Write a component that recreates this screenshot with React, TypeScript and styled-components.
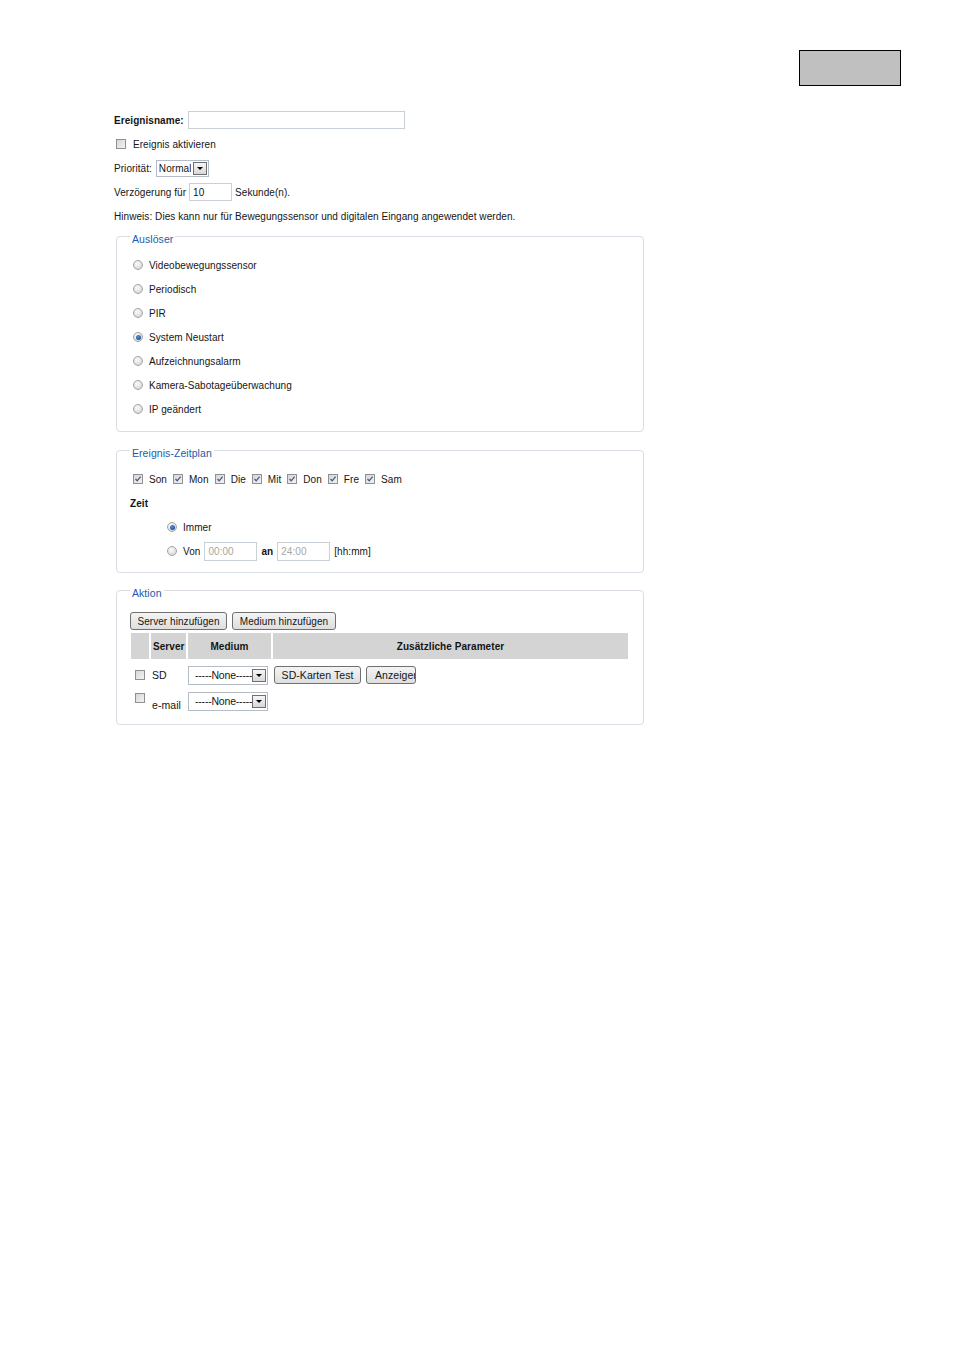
import React from "react";
import styled, { createGlobalStyle } from "styled-components";

const GlobalStyle = createGlobalStyle`
  html, body {
    margin: 0;
    padding: 0;
    background: #fff;
  }
  body {
    font-family: "Liberation Sans", Arial, sans-serif;
    font-size: 10px;
    letter-spacing: 0.06px;
    color: #151515;
  }
`;

const Page = styled.div`
  width: 954px;
  min-height: 1350px;
`;

const TopBar = styled.div`
  display: flex;
  justify-content: flex-end;
  padding: 50px 53px 0 0;
`;

const GrayBox = styled.div`
  width: 100px;
  height: 34px;
  background: #c0c0c0;
  border: 1px solid #000;
`;

const Form = styled.div`
  padding: 22px 0 0 114px;
  width: 540px;
`;

const Row = styled.div<{ $indent?: number; $gap?: number }>`
  display: flex;
  align-items: center;
  height: 24px;
  padding-left: ${(p) => p.$indent || 0}px;
  gap: ${(p) => p.$gap ?? 4}px;
  white-space: nowrap;
`;

const Bold = styled.span`
  font-weight: bold;
`;

const TextInput = styled.div<{ $w: number; $h?: number; $disabled?: boolean }>`
  width: ${(p) => p.$w}px;
  height: ${(p) => p.$h || 18}px;
  box-sizing: border-box;
  border: 1px solid #c9d0d8;
  background: #fff;
  padding: 0 3px;
  display: flex;
  align-items: center;
  color: ${(p) => (p.$disabled ? "#a6a6a6" : "#111")};
`;

const Box = styled.span`
  position: relative;
  display: inline-block;
  flex: none;
  width: 10px;
  height: 10px;
  box-sizing: border-box;
  border: 1px solid #8f9090;
  background: linear-gradient(135deg, #d6d6d6, #f3f3f3);
  svg {
    position: absolute;
    left: 0;
    top: 0;
  }
`;

const Checkbox = ({ checked }: { checked?: boolean }) => (
  <Box>
    {checked && (
      <svg width="8" height="8" viewBox="0 0 8 8">
        <path d="M1.5 4 L3.2 5.8 L6.6 1.6" fill="none" stroke="#4b5a86" strokeWidth="1.3" />
      </svg>
    )}
  </Box>
);

const Radio = styled.span<{ $on?: boolean }>`
  position: relative;
  display: inline-block;
  flex: none;
  width: 10px;
  height: 10px;
  border-radius: 50%;
  box-sizing: border-box;
  border: 1px solid #a3a3a3;
  background: radial-gradient(circle at 40% 35%, #fbfbfb, #cfcfcf);
  &::after {
    content: "";
    display: ${(p) => (p.$on ? "block" : "none")};
    position: absolute;
    left: 1.5px;
    top: 1.5px;
    width: 5px;
    height: 5px;
    border-radius: 50%;
    background: radial-gradient(circle at 40% 35%, #4f94d6, #0b3f80);
  }
`;

const SelectBox = styled.div<{ $w: number; $h: number; $pad?: number }>`
  width: ${(p) => p.$w}px;
  height: ${(p) => p.$h}px;
  box-sizing: border-box;
  border: 1px solid #b4bcc6;
  background: #fff;
  display: flex;
  align-items: center;
  justify-content: space-between;
  padding: 0 1px 0 ${(p) => p.$pad ?? 2}px;
  white-space: nowrap;
`;

const SelectValue = styled.span<{ $tight?: boolean }>`
  overflow: hidden;
  letter-spacing: ${(p) => (p.$tight ? "-0.2px" : "inherit")};
`;

const Arrow = styled.span`
  flex: none;
  width: 14px;
  height: 13px;
  box-sizing: border-box;
  border: 1px solid #6f6f6f;
  background: linear-gradient(#f6f6f6, #d8d8d8);
  display: flex;
  align-items: center;
  justify-content: center;
  &::before {
    content: "";
    border-left: 3px solid transparent;
    border-right: 3px solid transparent;
    border-top: 3px solid #000;
  }
`;

const Select = ({ value, w, h, pad, tight }: { value: string; w: number; h: number; pad?: number; tight?: boolean }) => (
  <SelectBox $w={w} $h={h} $pad={pad}>
    <SelectValue $tight={tight}>{value}</SelectValue>
    <Arrow />
  </SelectBox>
);

const Fieldset = styled.fieldset<{ $top: number; $pt: number; $pb: number }>`
  margin: ${(p) => p.$top}px 0 0 2px;
  width: 528px;
  box-sizing: border-box;
  border: 1px solid #d9dee4;
  border-radius: 4px;
  padding: ${(p) => p.$pt}px 13px ${(p) => p.$pb}px 13px;
  min-width: 0;
`;

const Legend = styled.legend`
  position: relative;
  top: 3px;
  padding: 0 2px;
  color: #1b5cab;
  font-size: 10.5px;
  line-height: 14px;
`;

const Button = styled.div<{ $w: number; $clip?: boolean }>`
  width: ${(p) => p.$w}px;
  height: 18px;
  box-sizing: border-box;
  border: 1px solid #707070;
  border-radius: 3px;
  background: linear-gradient(#f4f4f4, #dedede);
  display: flex;
  align-items: center;
  justify-content: ${(p) => (p.$clip ? "flex-start" : "center")};
  padding-left: ${(p) => (p.$clip ? 8 : 0)}px;
  overflow: hidden;
  white-space: nowrap;
  flex: none;
`;

const ButtonRow = styled.div`
  display: flex;
  gap: 5px;
`;

const Table = styled.table`
  border-collapse: separate;
  border-spacing: 2px;
  margin: 1px 0 0 -1px;
  table-layout: fixed;
`;

const Th = styled.th<{ $w: number; $left?: boolean }>`
  width: ${(p) => p.$w}px;
  height: 26px;
  padding: 0 0 0 ${(p) => (p.$left ? 2 : 0)}px;
  background: #d4d4d4;
  text-align: ${(p) => (p.$left ? "left" : "center")};
  font-weight: bold;
  box-sizing: border-box;
`;

const Td = styled.td<{ $valign?: string; $pl?: number; $h?: number }>`
  padding: 0 0 0 ${(p) => p.$pl ?? 0}px;
  vertical-align: ${(p) => p.$valign || "middle"};
  height: ${(p) => p.$h || 20}px;
  font-size: 10.5px;
`;

const CellFlex = styled.div<{ $pt?: number }>`
  display: flex;
  gap: 5px;
  align-items: center;
  padding-top: ${(p) => p.$pt || 0}px;
`;

const triggers = [
  "Videobewegungssensor",
  "Periodisch",
  "PIR",
  "System Neustart",
  "Aufzeichnungsalarm",
  "Kamera-Sabotageüberwachung",
  "IP geändert",
];

const days = ["Son", "Mon", "Die", "Mit", "Don", "Fre", "Sam"];

export default function App() {
  return (
    <Page>
      <GlobalStyle />
      <TopBar>
        <GrayBox />
      </TopBar>

      <Form>
        <Row $gap={4}>
          <Bold>Ereignisname:</Bold>
          <TextInput $w={217} />
        </Row>
        <Row $indent={2} $gap={7}>
          <Checkbox />
          <span>Ereignis aktivieren</span>
        </Row>
        <Row $gap={4}>
          <span>Priorität:</span>
          <Select value="Normal" w={53} h={17} />
        </Row>
        <Row $gap={3}>
          <span>Verzögerung für</span>
          <TextInput $w={43}>10</TextInput>
          <span>Sekunde(n).</span>
        </Row>
        <Row>
          <span>Hinweis: Dies kann nur für Bewegungssensor und digitalen Eingang angewendet werden.</span>
        </Row>

        <Fieldset $top={1} $pt={10} $pb={10}>
          <Legend>Auslöser</Legend>
          {triggers.map((t) => (
            <Row key={t} $indent={3} $gap={6}>
              <Radio $on={t === "System Neustart"} />
              <span>{t}</span>
            </Row>
          ))}
        </Fieldset>

        <Fieldset $top={11} $pt={10} $pb={9}>
          <Legend>Ereignis-Zeitplan</Legend>
          <Row $indent={3} $gap={6}>
            {days.map((d) => (
              <React.Fragment key={d}>
                <Checkbox checked />
                <span>{d}</span>
              </React.Fragment>
            ))}
          </Row>
          <Row $indent={-1}>
            <Bold>Zeit</Bold>
          </Row>
          <Row $indent={37} $gap={6}>
            <Radio $on />
            <span>Immer</span>
          </Row>
          <Row $indent={37} $gap={4}>
            <Radio />
            <span style={{ marginLeft: 2 }}>Von</span>
            <TextInput $w={53} $h={19} $disabled>
              00:00
            </TextInput>
            <Bold>an</Bold>
            <TextInput $w={53} $h={19} $disabled>
              24:00
            </TextInput>
            <span>[hh:mm]</span>
          </Row>
        </Fieldset>

        <Fieldset $top={10} $pt={15} $pb={11}>
          <Legend>Aktion</Legend>
          <ButtonRow>
            <Button $w={97}>Server hinzufügen</Button>
            <Button $w={104}>Medium hinzufügen</Button>
          </ButtonRow>
          <Table>
            <thead>
              <tr>
                <Th $w={18} />
                <Th $w={35} $left>
                  Server
                </Th>
                <Th $w={83}>Medium</Th>
                <Th $w={355}>Zusätzliche Parameter</Th>
              </tr>
            </thead>
            <tbody>
              <tr>
                <Td $pl={4} $h={28}>
                  <CellFlex>
                    <Checkbox />
                  </CellFlex>
                </Td>
                <Td $pl={1} $h={28}>
                  SD
                </Td>
                <Td $h={28}>
                  <Select value="-----None-----" w={80} h={19} pad={6} tight />
                </Td>
                <Td $pl={1} $h={28}>
                  <CellFlex>
                    <Button $w={87}>SD-Karten Test</Button>
                    <Button $w={50} $clip>
                      Anzeigen
                    </Button>
                  </CellFlex>
                </Td>
              </tr>
              <tr>
                <Td $pl={4} $valign="top">
                  <CellFlex $pt={2}>
                    <Checkbox />
                  </CellFlex>
                </Td>
                <Td $pl={1} $valign="bottom">
                  e-mail
                </Td>
                <Td>
                  <Select value="-----None-----" w={80} h={19} pad={6} tight />
                </Td>
                <Td />
              </tr>
            </tbody>
          </Table>
        </Fieldset>
      </Form>
    </Page>
  );
}
